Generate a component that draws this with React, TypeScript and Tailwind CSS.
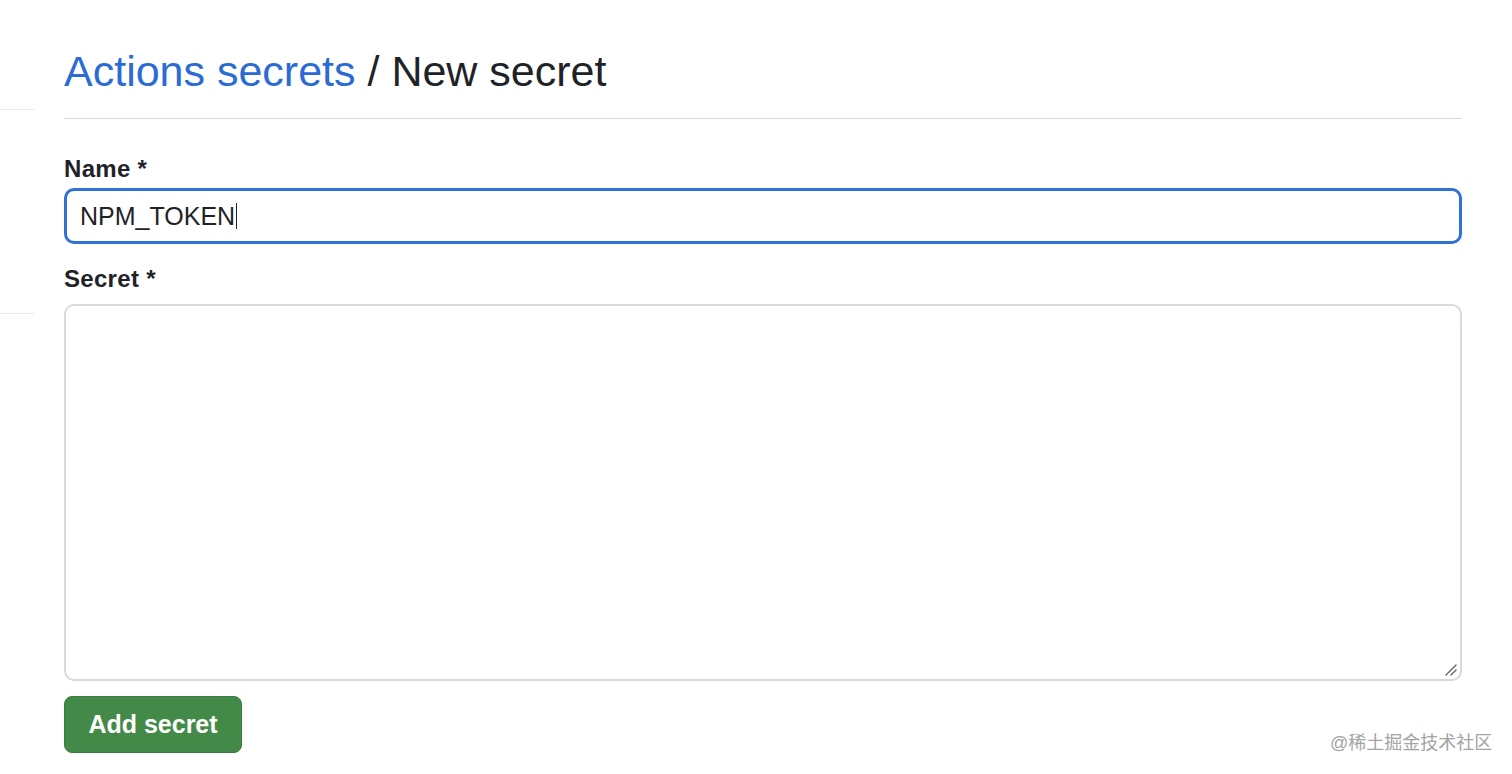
import React from 'react';

const sans = { fontFamily: '"Liberation Sans", Arial, sans-serif' };

function ResizeHandle() {
  return (
    <svg width="12" height="12" viewBox="0 0 12 12" className="absolute right-[3px] bottom-[3px]">
      <path d="M11 1 L1 11" stroke="#57606a" strokeWidth="1.3" strokeLinecap="round" />
      <path d="M11 6 L6 11" stroke="#57606a" strokeWidth="1.3" strokeLinecap="round" />
    </svg>
  );
}

export default function App() {
  return (
    <div className="relative flex h-[774px] w-[1512px] overflow-hidden bg-white text-[#1f2328]" style={sans}>
      {/* Sidebar edge */}
      <div className="w-[34px] shrink-0">
        <div className="mt-[109px] h-px bg-[#e6e8eb]" />
        <div className="mt-[203px] h-px bg-[#e6e8eb]" />
      </div>

      {/* Main */}
      <div className="ml-[30px] w-[1398px]">
        <div className="border-b border-[#d4d8dd] pt-[50px] pb-[25px]">
          <h1 className="text-[43px] leading-[43px] font-normal">
            <a className="text-[#2b6bd3]">Actions secrets</a>
            <span> / New secret</span>
          </h1>
        </div>

        <form className="flex flex-col">
          <label className="mt-[38px] text-[24px] leading-[24px] font-bold tracking-[0.3px]">Name *</label>
          <div className="mt-[7px] flex h-[56px] items-center rounded-[10px] border-[3px] border-[#3170d5] px-[13px]">
            <span className="text-[25px] leading-[25px]">NPM_TOKEN</span>
            <span className="ml-px h-[26px] w-px bg-[#1f2328]" />
          </div>

          <label className="mt-[23px] text-[24px] leading-[24px] font-bold tracking-[0.3px]">Secret *</label>
          <div className="relative mt-[13px] h-[377px] rounded-[10px] border-2 border-[#d7dadd] bg-white">
            <ResizeHandle />
          </div>

          <div className="mt-[15px]">
            <button
              type="button"
              className="h-[57px] w-[178px] rounded-[8px] border border-[#3b7d40] bg-[#438a48] text-[25px] font-bold text-white"
            >
              Add secret
            </button>
          </div>
        </form>
      </div>

      {/* Watermark */}
      <div
        className="absolute left-[1330px] top-[733px] text-[18px] leading-[20px] text-[#a3a3a3]"
        style={{ fontFamily: '"Liberation Sans", "Noto Sans CJK SC", sans-serif' }}
      >
        @稀土掘金技术社区
      </div>
    </div>
  );
}
